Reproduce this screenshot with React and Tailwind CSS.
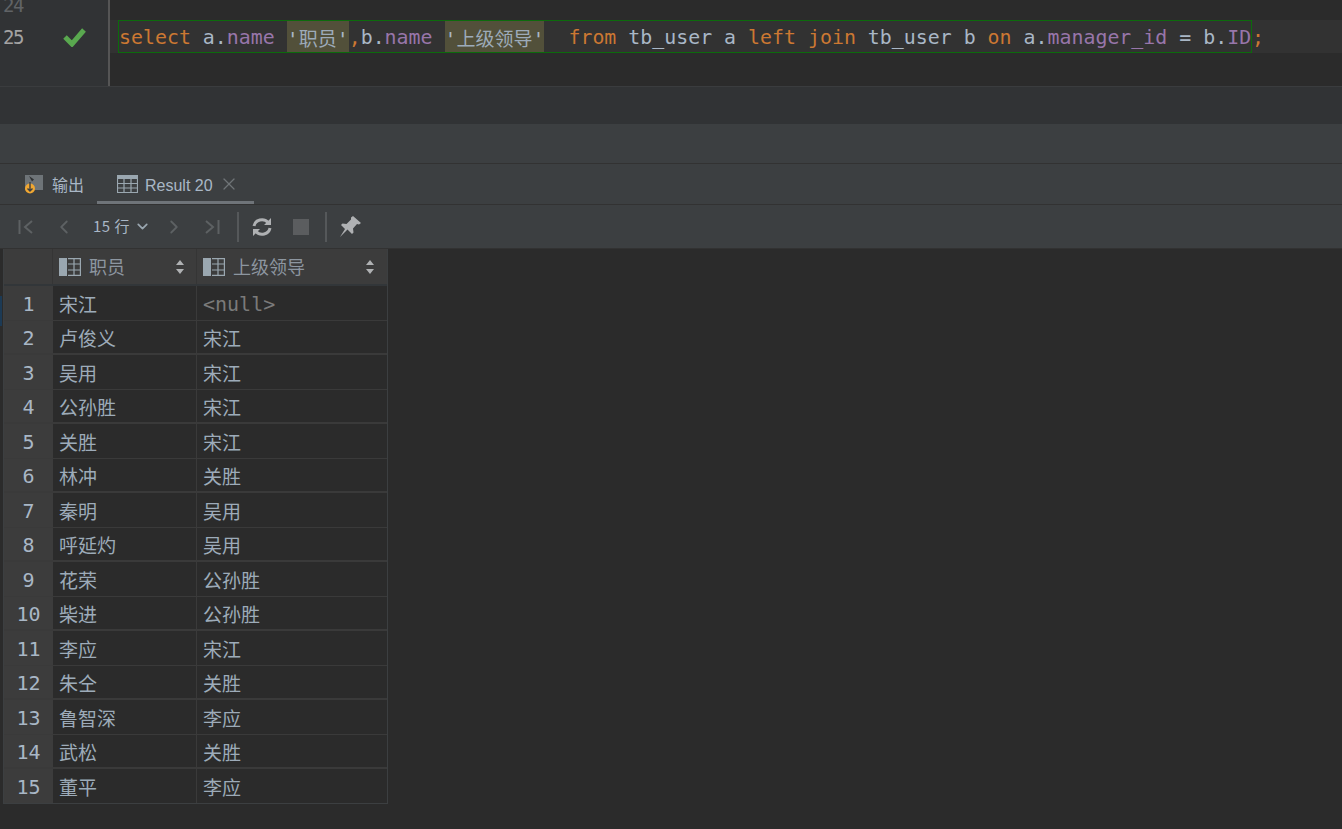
import { ChevronDown, ChevronLeft, ChevronRight, X } from 'lucide-react';

const mono = "font-['DejaVu_Sans_Mono','Liberation_Mono','Noto_Sans_CJK_SC',monospace]";
const cjk = "font-['Noto_Sans_CJK_SC',sans-serif]";

const rows = [
  ['宋江', null],
  ['卢俊义', '宋江'],
  ['吴用', '宋江'],
  ['公孙胜', '宋江'],
  ['关胜', '宋江'],
  ['林冲', '关胜'],
  ['秦明', '吴用'],
  ['呼延灼', '吴用'],
  ['花荣', '公孙胜'],
  ['柴进', '公孙胜'],
  ['李应', '宋江'],
  ['朱仝', '关胜'],
  ['鲁智深', '李应'],
  ['武松', '关胜'],
  ['董平', '李应'],
];

function Kw({ children }) {
  return <span className="text-[#cc7832]">{children}</span>;
}

function Col({ children }) {
  return <span className="text-[#9876aa]">{children}</span>;
}

function Alias({ children }) {
  return (
    <span className="bg-[#52503a] inline-block h-[31px] leading-[33px] align-top text-[#a9b7c6]">
      '<span className={`${cjk} text-[19px] text-[#9dabb9]`}>{children}</span>'
    </span>
  );
}

function TableIcon() {
  return (
    <svg width="21" height="18" viewBox="0 0 21 18" className="shrink-0">
      <rect x="0" y="0" width="21" height="4" fill="#9aa7b0" />
      <path d="M.5 4v13.5h20V4M0 8.5h21M0 13h21M7 4v14M14 4v14" stroke="#9aa7b0" strokeWidth="1.2" fill="none" />
    </svg>
  );
}

function ColumnIcon() {
  return (
    <svg width="22" height="18" viewBox="0 0 22 18" className="shrink-0">
      <rect x="0" y="0" width="8" height="18" fill="#9aa7b0" />
      <path d="M9 .6h12.4v16.8H9M9 6h12.4M9 12h12.4M15 .6v16.8" stroke="#9aa7b0" strokeWidth="1.2" fill="none" />
    </svg>
  );
}

function SortIcon() {
  return (
    <svg width="8" height="14" viewBox="0 0 8 14" className="shrink-0">
      <path d="M4 0l4 5H0zM4 14L0 9h8z" fill="#afb1b3" />
    </svg>
  );
}

function OutputIcon() {
  return (
    <svg width="20" height="20" viewBox="0 0 20 20" className="shrink-0">
      <rect x="1" y="1" width="18" height="15" fill="#6e7478" />
      <path d="M5 2l5 3.5-2 2z" fill="#2f3234" />
      <circle cx="6" cy="14.5" r="5" fill="#f0a732" />
      <path d="M6 8v9M3.5 14.5L6 17l2.5-2.5" stroke="#3c3f41" strokeWidth="1.4" fill="none" />
    </svg>
  );
}

function Toolbar() {
  return (
    <div className="h-[44px] bg-[#3c3f41] border-b border-[#323232] flex items-center shrink-0">
      <svg width="16" height="16" viewBox="0 0 16 16" className="ml-[18px] shrink-0">
        <path d="M1.5 1v14M14 2L7 8l7 6" stroke="#5d6163" strokeWidth="2" fill="none" />
      </svg>
      <ChevronLeft size={22} strokeWidth={2} className="ml-[19px] text-[#5d6163] shrink-0" />
      <span className={`ml-[18px] text-[15px] tracking-[0.5px] text-[#a9b7c6] ${cjk}`}>15 行</span>
      <ChevronDown size={17} strokeWidth={2.4} className="ml-[4px] text-[#9aa7b0] shrink-0" />
      <ChevronRight size={22} strokeWidth={2} className="ml-[12px] text-[#5d6163] shrink-0" />
      <svg width="16" height="16" viewBox="0 0 16 16" className="ml-[19px] shrink-0">
        <path d="M2 2l7 6-7 6M14.5 1v14" stroke="#5d6163" strokeWidth="2" fill="none" />
      </svg>
      <div className="ml-[17px] w-[2px] h-[30px] bg-[#55585a]" />
      <svg width="20" height="20" viewBox="0 0 20 20" className="ml-[13px] shrink-0">
        <path d="M2 9a8 7.5 0 0 1 14-3.6M18 11a8 7.5 0 0 1-14 3.6" stroke="#afb1b3" strokeWidth="3" fill="none" />
        <path d="M19 1v7h-7zM1 19v-7h7z" fill="#afb1b3" />
      </svg>
      <div className="ml-[21px] w-[16px] h-[16px] bg-[#5b5d5f] shrink-0" />
      <div className="ml-[16px] w-[2px] h-[30px] bg-[#55585a]" />
      <svg width="22" height="22" viewBox="0 0 22 22" className="ml-[12px] shrink-0">
        <path d="M14 0l8 7-2 1.5-2-.5-4 4.5.5 4-1.5 1.5-4.5-4.5L1 21l5-8-4-4 1.5-1.5 4 .5L12 3.5 12 1.5z" fill="#afb1b3" />
      </svg>
    </div>
  );
}

export default function App() {
  return (
    <div className="w-[1342px] h-[829px] overflow-hidden flex flex-col bg-[#2b2b2b] font-['Liberation_Sans',sans-serif]">
      {/* editor */}
      <div className={`h-[87px] flex shrink-0 border-b border-[#3a3c3e] ${mono}`}>
        <div className="w-[108px] bg-[#313335] border-r-2 border-[#555555] shrink-0 box-content">
          <div className="h-[20px] pl-[3px] pb-[4px] overflow-hidden flex items-end text-[19px] tracking-[-1.5px] leading-[22px] text-[#606366]">24</div>
          <div className="h-[33px] pl-[3px] pt-[2px] flex items-center text-[19px] tracking-[-1.5px] text-[#a4a3a3]">
            25
            <svg width="24" height="20" viewBox="0 0 24 20" className="ml-[40px] -mt-[2px]">
              <path d="M2 10l7 7L21 3" stroke="#59a84f" strokeWidth="5" fill="none" />
            </svg>
          </div>
        </div>
        <div className="flex-1 pt-[20px]">
          <div className="h-[33px] bg-[#323232] pl-[8px] flex text-[19.9px] whitespace-pre text-[#a9b7c6]">
            <div className="w-[1134px] h-[33px] border border-[#0c6b0c] leading-[33px] overflow-hidden">
              <Kw>select</Kw> a.<Col>name</Col> <Alias>职员</Alias><Kw>,</Kw>b.<Col>name</Col> <Alias>上级领导</Alias>  <Kw>from</Kw> tb_user a <Kw>left</Kw> <Kw>join</Kw> tb_user b <Kw>on</Kw> a.<Col>manager_id</Col> = b.<Col>ID</Col>
            </div>
            <span className="leading-[35px] text-[#cc7832]">;</span>
          </div>
        </div>
      </div>

      <div className="h-[37px] bg-[#313335] shrink-0" />
      <div className="h-[40px] bg-[#3c3f41] border-b border-[#323232] shrink-0" />

      {/* result panel */}
      <div className="h-[41px] bg-[#3c3f41] border-b border-[#323232] flex items-stretch shrink-0">
        <div className="flex items-center w-[97px] pl-[24px] gap-[8px] text-[16px] text-[#a9b7c6]">
          <OutputIcon />
          <span className={cjk}>输出</span>
        </div>
        <div className="w-[157px] relative flex items-center pl-[20px] text-[16px] text-[#a9b7c6]">
          <TableIcon />
          <span className="ml-[7px] pt-[3px]">Result 20</span>
          <X size={20} strokeWidth={1.5} className="ml-[6px] text-[#6f7477]" />
          <div className="absolute left-0 right-0 bottom-0 h-[3px] bg-[#6f7479]" />
        </div>
      </div>
      <Toolbar />

      {/* grid */}
      <div className="flex-1 pl-[3px] relative">
        <div className="absolute left-0 top-[47px] w-[2px] h-[30px] bg-[#1c3a55]" />
        <div className="w-[385px] border-l border-r border-b border-[#3c3f41]">
          <div className="h-[37px] flex bg-[#3c3c3c] border-b-2 border-[#323639] text-[18px] text-[#8d96a0]">
            <div className="w-[49px] shrink-0 border-r border-[#353535]" />
            <div className="w-[144px] shrink-0 border-r border-[#353535] flex items-center pl-[6px]">
              <ColumnIcon />
              <span className={`ml-[8px] flex-1 ${cjk}`}>职员</span>
              <span className="pr-[12px]"><SortIcon /></span>
            </div>
            <div className="flex-1 flex items-center pl-[6px]">
              <ColumnIcon />
              <span className={`ml-[8px] flex-1 ${cjk}`}>上级领导</span>
              <span className="pr-[13px]"><SortIcon /></span>
            </div>
          </div>
          {rows.map(([name, boss], i) => (
            <div key={i} className={`flex ${i === 14 ? 'h-[34px]' : i % 2 === 0 ? 'h-[35px] border-b border-[#3a3a3a]' : 'h-[34px] border-b-2 border-[#3a3a3a]'}`}>
              <div className={`w-[49px] shrink-0 bg-[#3c3c3c] flex items-center justify-center pt-[2px] text-[20px] text-[#a9b7c6] ${mono}`}>{i + 1}</div>
              <div className={`w-[144px] shrink-0 border-r border-[#3a3a3a] flex items-center pl-[6px] pt-[2px] text-[19px] text-[#9dabb9] ${cjk}`}>{name}</div>
              <div className={`flex-1 flex items-center pl-[6px] pt-[2px] text-[19px] text-[#9dabb9] ${cjk}`}>
                {boss ?? <span className={`text-[20px] text-[#7a7a7a] ${mono}`}>&lt;null&gt;</span>}
              </div>
            </div>
          ))}
        </div>
      </div>
    </div>
  );
}
